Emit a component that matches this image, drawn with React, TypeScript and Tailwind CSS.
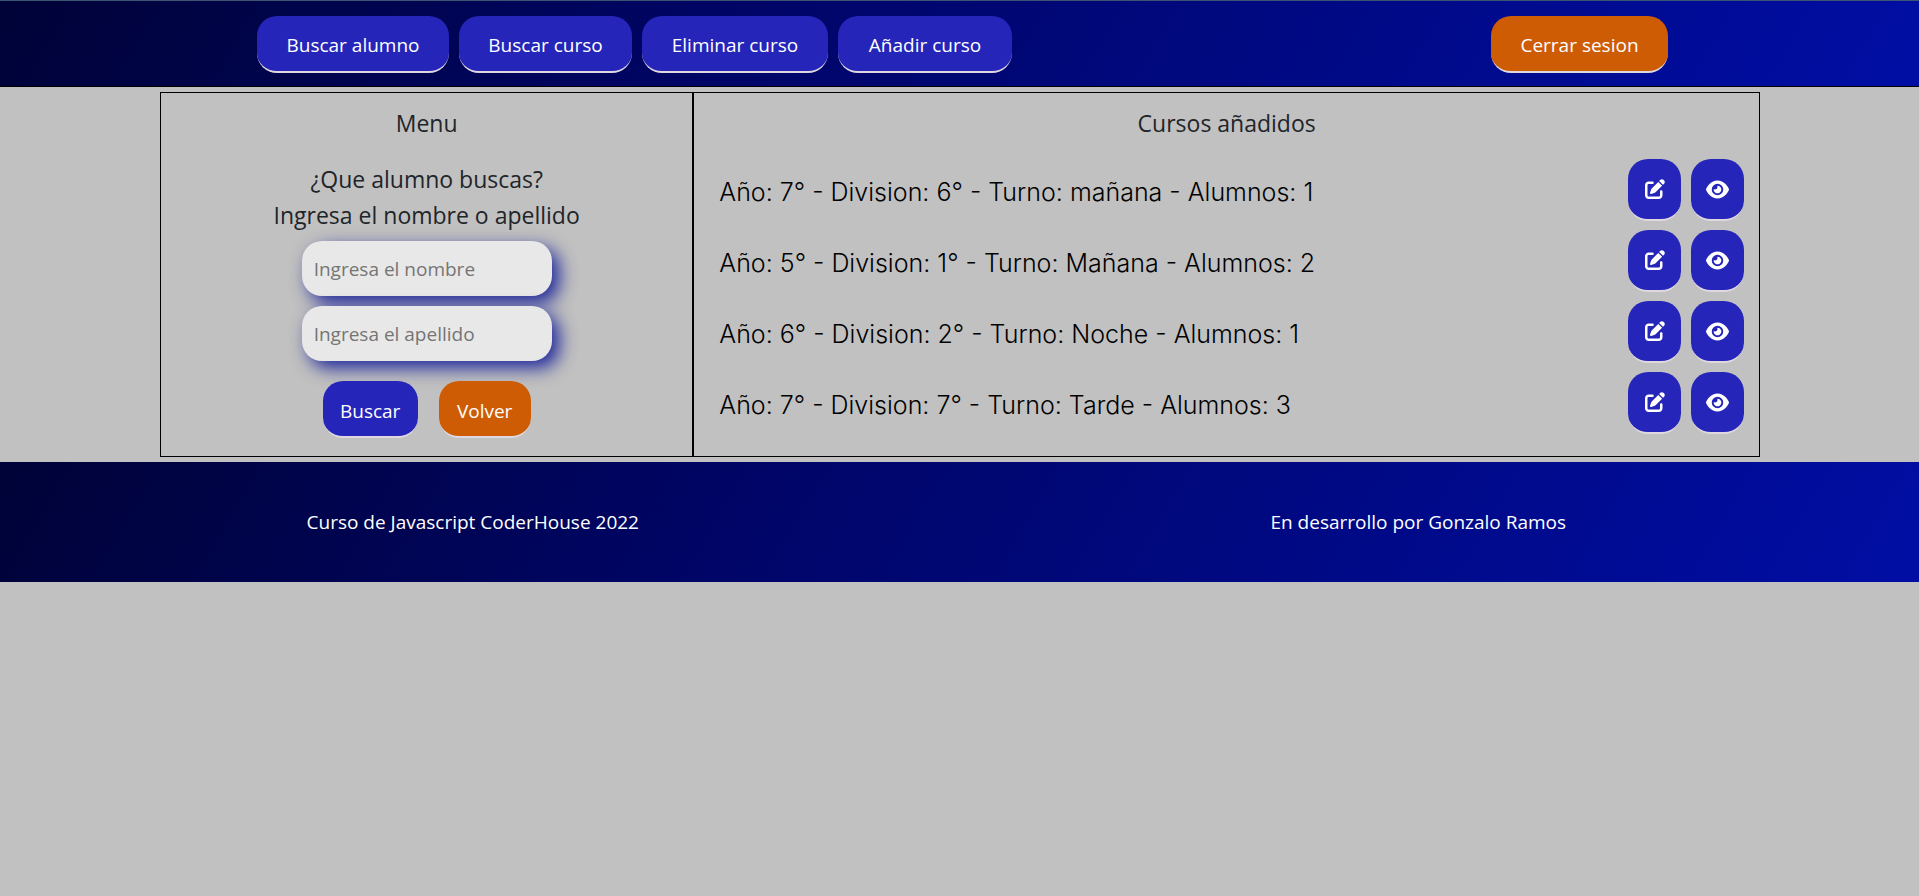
import type { ReactNode } from "react";
import { FaEye, FaPenToSquare } from "react-icons/fa6";

const cursos = [
  { anio: 7, division: 6, turno: "mañana", alumnos: 1 },
  { anio: 5, division: 1, turno: "Mañana", alumnos: 2 },
  { anio: 6, division: 2, turno: "Noche", alumnos: 1 },
  { anio: 7, division: 7, turno: "Tarde", alumnos: 3 },
];

const barra = "bg-linear-[120deg,#000337,#000566_38%,#000ea4]";

function Boton({ children, className, label }: { children: ReactNode; className: string; label?: string }) {
  return (
    <button
      type="button"
      aria-label={label}
      className={`flex shrink-0 items-center justify-center rounded-[20px] border-b-2 border-[#e0d8e0] text-white ${className}`}
    >
      {children}
    </button>
  );
}

function Campo({ id, texto }: { id: string; texto: string }) {
  return (
    <input
      id={id}
      type="text"
      aria-label={texto}
      placeholder={texto}
      className="h-[55px] w-[250px] rounded-[20px] bg-[#e8e8e8] px-3 text-[19px] text-[#212529] shadow-[7px_7px_18px_#000b93d9] placeholder:text-[#757575]"
    />
  );
}

export default function App() {
  return (
    <div className="min-h-screen bg-[#c1c1c1] font-['Open_Sans','Noto_Sans',sans-serif] text-[#212529]">
      <header className={`border-t border-b border-t-[#3b5472] border-b-black pt-[15px] pr-[251px] pb-[13px] pl-[257px] ${barra}`}>
        <nav className="flex items-center justify-between text-[19px]">
          <div className="flex gap-[10px]">
            <Boton className="h-[57px] w-[192px] bg-[#2525b9] pt-1">Buscar alumno</Boton>
            <Boton className="h-[57px] w-[173px] bg-[#2525b9] pt-1">Buscar curso</Boton>
            <Boton className="h-[57px] w-[186px] bg-[#2525b9] pt-1">Eliminar curso</Boton>
            <Boton className="h-[57px] w-[174px] bg-[#2525b9] pt-1">Añadir curso</Boton>
          </div>
          <Boton className="h-[57px] w-[177px] bg-[#cd5c05] pt-1">Cerrar sesion</Boton>
        </nav>
      </header>

      <main className="grid grid-cols-[1fr_2fr] py-[5px] pr-[159px] pl-[160px]">
        <section className="flex flex-col items-center border border-black pt-3 pb-[18px] text-[23px] leading-9">
          <h2>Menu</h2>
          <p className="mt-5">¿Que alumno buscas?</p>
          <p>Ingresa el nombre o apellido</p>
          <form className="mt-2 flex flex-col items-center gap-[10px]">
            <Campo id="nombre" texto="Ingresa el nombre" />
            <Campo id="apellido" texto="Ingresa el apellido" />
            <div className="mt-[10px] flex gap-[21px] text-[19px]">
              <Boton className="h-[57px] w-[95px] bg-[#2525b9] pt-1">Buscar</Boton>
              <Boton className="h-[57px] w-[92px] bg-[#cd5c05] pt-1">Volver</Boton>
            </div>
          </form>
        </section>

        <section className="border border-black pt-3">
          <h2 className="text-center text-[23px] leading-9">Cursos añadidos</h2>
          <ul className="mt-[18px] flex flex-col gap-[9px] pr-[15px] pl-[25px]">
            {cursos.map((c, i) => (
              <li key={i} className="flex items-center justify-between">
                <p className="pt-1 font-['Inter',sans-serif] text-[25px] leading-9 font-light text-black">
                  Año: {c.anio}° - Division: {c.division}° - Turno: {c.turno} - Alumnos: {c.alumnos}
                </p>
                <div className="flex gap-[10px]">
                  <Boton label="Editar curso" className="h-[62px] w-[53px] bg-[#2525b9]">
                    <FaPenToSquare size={20} />
                  </Boton>
                  <Boton label="Ver curso" className="h-[62px] w-[53px] bg-[#2525b9]">
                    <FaEye size={23} />
                  </Boton>
                </div>
              </li>
            ))}
          </ul>
        </section>
      </main>

      <footer className={`grid h-[120px] grid-cols-2 items-center pr-7 text-center text-[19px] text-white ${barra}`}>
        <p>Curso de Javascript CoderHouse 2022</p>
        <p>En desarrollo por Gonzalo Ramos</p>
      </footer>
    </div>
  );
}
